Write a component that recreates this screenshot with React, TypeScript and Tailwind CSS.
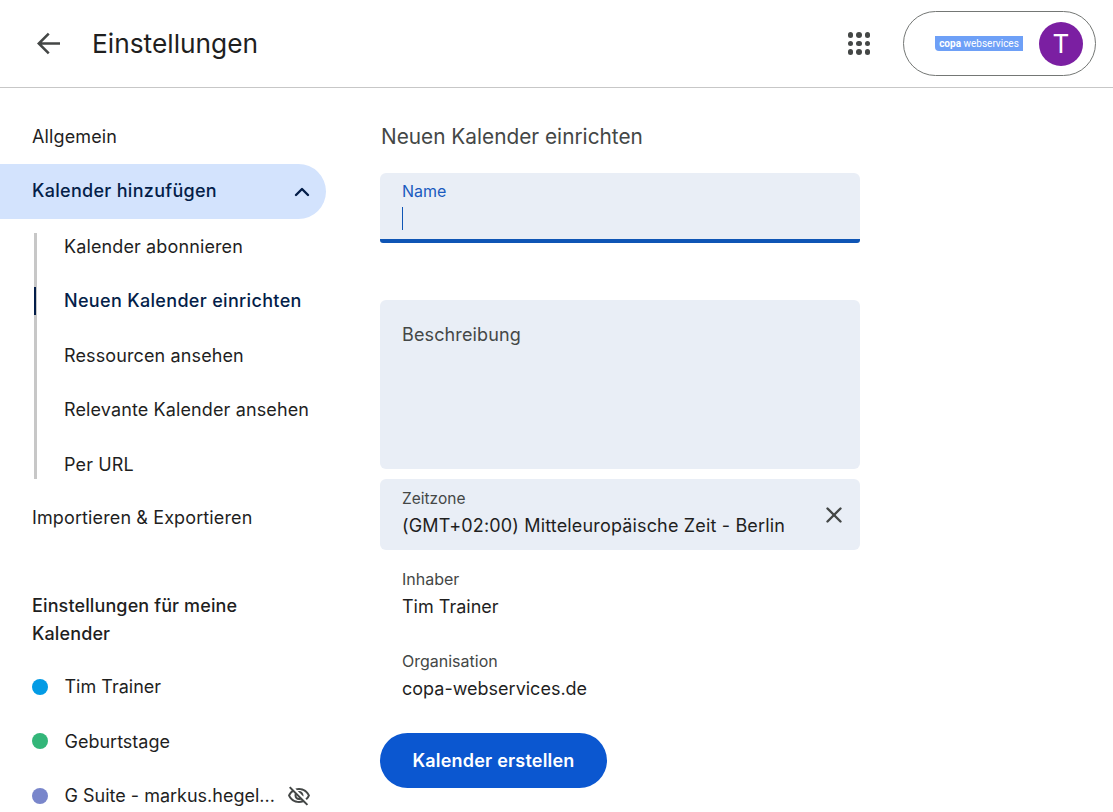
import { ChevronUp, X } from "lucide-react";

const subItems = [
  { label: "Kalender abonnieren" },
  { label: "Neuen Kalender einrichten", active: true },
  { label: "Ressourcen ansehen" },
  { label: "Relevante Kalender ansehen" },
  { label: "Per URL" },
];

const calendars = [
  { name: "Tim Trainer", dot: "bg-[#039be5]" },
  { name: "Geburtstage", dot: "bg-[#33b679]" },
  { name: "G Suite - markus.hegel...", dot: "bg-[#7986cb]", hidden: true },
];

function Sidebar() {
  return (
    <aside className="w-[326px] shrink-0 pt-[21px] text-[18px] tracking-[0.12px] text-[#1f1f1f]">
      <div className="h-[55px] pl-8 flex items-center">Allgemein</div>
      <div className="h-[55px] pl-8 pr-[12px] flex items-center justify-between rounded-r-full bg-[#d3e3fd] text-[#041e49] font-medium tracking-[0.3px]">
        <span className="-mt-[2px]">Kalender hinzufügen</span>
        <ChevronUp size={24} strokeWidth={2.4} />
      </div>
      {/* sub navigation */}
      <div className="ml-[34px] mt-[14px] flex flex-col border-l-[3px] border-[#c7c7c7]">
        <div className="-mt-[14px] -mb-[13px]">
          {subItems.map((item) => (
            <div
              key={item.label}
              className={`relative h-[54.5px] pl-[27px] flex items-center ${
                item.active ? "text-[#041e49] font-medium tracking-[0.33px]" : ""
              }`}
            >
              {item.active && <span className="absolute -left-[3px] top-[13px] h-[28px] w-[2px] bg-[#041e49]" />}
              {item.label}
            </div>
          ))}
        </div>
      </div>
      <div className="h-[55px] mt-[11px] pl-8 flex items-center">Importieren &amp; Exportieren</div>
      <div className="pl-8 mt-[47px] font-medium leading-[28px] w-[260px]">Einstellungen für meine Kalender</div>
      <div className="mt-[12px] tracking-normal">
        {calendars.map((c) => (
          <div key={c.name} className="h-[54.5px] pl-8 flex items-center">
            <span className={`w-4 h-4 rounded-full ${c.dot}`} />
            <span className="ml-[16.500px]">{c.name}</span>
            {c.hidden && (
              <svg className="ml-[12px]" width="24" height="24" viewBox="0 0 24 24" fill="#444746">
                <path d="M12 6c3.790 0 7.170 2.130 8.820 5.500-.59 1.220-1.420 2.270-2.410 3.120l1.410 1.410c1.390-1.230 2.490-2.770 3.180-4.530C21.270 7.110 17 4 12 4c-1.270 0-2.490.2-3.640.57l1.650 1.650C10.660 6.090 11.320 6 12 6zm-1.070 1.140L13 9.210c.57.25 1.030.71 1.280 1.280l2.070 2.070c.08-.34.14-.7.14-1.070C16.500 9.010 14.480 7 12 7c-.37 0-.72.05-1.070.14zM2.010 3.870l2.680 2.680C3.060 7.830 1.770 9.530 1 11.500 2.730 15.890 7 19 12 19c1.520 0 2.980-.29 4.320-.82l3.420 3.420 1.410-1.410L3.420 2.450 2.010 3.870zm7.500 7.500l2.610 2.610c-.04.01-.08.02-.12.02-1.380 0-2.500-1.120-2.500-2.500 0-.05.01-.08.01-.13zm-3.400-3.400l1.750 1.750c-.23.55-.36 1.150-.36 1.780 0 2.480 2.020 4.500 4.500 4.500.63 0 1.230-.13 1.770-.36l.98.98c-.88.24-1.800.38-2.750.38-3.790 0-7.170-2.130-8.820-5.500.7-1.430 1.720-2.610 2.930-3.530z" />
              </svg>
            )}
          </div>
        ))}
      </div>
    </aside>
  );
}

export default function App() {
  return (
    <div className="w-[1113px] h-[812px] overflow-hidden bg-white font-['Inter',sans-serif]">
      <header className="h-[88px] border-b border-[#c7c7c7] flex items-center pl-[37px] pr-[17px]">
        <svg width="23" height="23" viewBox="0 0 24 24" fill="#444746">
          <path d="M24 10.700H5.100l8.100-8.100L11.300.700 0 12l11.300 11.300 1.900-1.900-8.100-8.100H24z" />
        </svg>
        <h1 className="ml-[32px] text-[26.300px] text-[#1f1f1f]">Einstellungen</h1>
        <div className="ml-auto mr-[33px] grid grid-cols-3 gap-[3px]">
          {Array.from({ length: 9 }).map((_, i) => (
            <span key={i} className="w-[5.500px] h-[5.500px] rounded-full bg-[#444746]" />
          ))}
        </div>
        <div className="w-[193px] h-[65px] rounded-full border border-[#747775] flex items-center pl-[31px] pr-[12px]">
          <div className="w-[88px] h-[15px] bg-[#6ea0f7] rounded-bl-[4px] flex items-center justify-center whitespace-nowrap font-['Roboto',sans-serif] text-[10px] leading-none text-white">
            <span className="font-bold">copa</span>&nbsp;webservices
          </div>
          <div className="ml-auto w-11 h-11 rounded-full bg-[#7b1fa2] text-white text-[26px] flex items-center justify-center">T</div>
        </div>
      </header>
      <div className="flex">
        <Sidebar />
        <main className="ml-[54px] w-[480px] pt-[33px] text-[#1f1f1f] text-[18px]">
          <h2 className="pl-px text-[20.800px] leading-[32px] text-[#444746]">Neuen Kalender einrichten</h2>
          <div className="mt-[20px] h-[70px] rounded-t-[6px] rounded-b-[3px] bg-[#e9eef6] border-b-[4px] border-[#0f55b5] pl-[22px] pt-[8px]">
            <div className="text-[16px] leading-[20px] text-[#1a5bbf]">Name</div>
            <div className="mt-[6px] w-px h-[23px] bg-[#0f55b5]" />
          </div>
          <div className="mt-[57px] h-[169px] rounded-[6px] bg-[#e9eef6] pl-[22px] pt-[23px] leading-[24px] tracking-[0.12px] text-[#444746]">
            Beschreibung
          </div>
          <div className="mt-[10px] h-[71px] rounded-[6px] bg-[#e9eef6] pl-[22px] pr-[13px] flex items-center justify-between">
            <div className="self-start pt-[10px]">
              <div className="text-[15.500px] leading-[20px] text-[#444746]">Zeitzone</div>
              <div className="mt-[5px] leading-[24px] tracking-[0.16px]">(GMT+02:00) Mitteleuropäische Zeit - Berlin</div>
            </div>
            <X size={26} strokeWidth={2.2} className="text-[#444746]" />
          </div>
          <div className="mt-[19px] pl-[22px]">
            <div className="text-[16px] leading-[20px] text-[#444746]">Inhaber</div>
            <div className="mt-[6px] leading-[24px]">Tim Trainer</div>
          </div>
          <div className="mt-[32px] pl-[22px]">
            <div className="text-[16px] leading-[20px] text-[#444746]">Organisation</div>
            <div className="mt-[6px] leading-[24px]">copa-webservices.de</div>
          </div>
          <button className="mt-[32px] h-[55px] w-[227px] rounded-full bg-[#0b57d0] text-white font-semibold tracking-[0.2px]">
            Kalender erstellen
          </button>
        </main>
      </div>
    </div>
  );
}
